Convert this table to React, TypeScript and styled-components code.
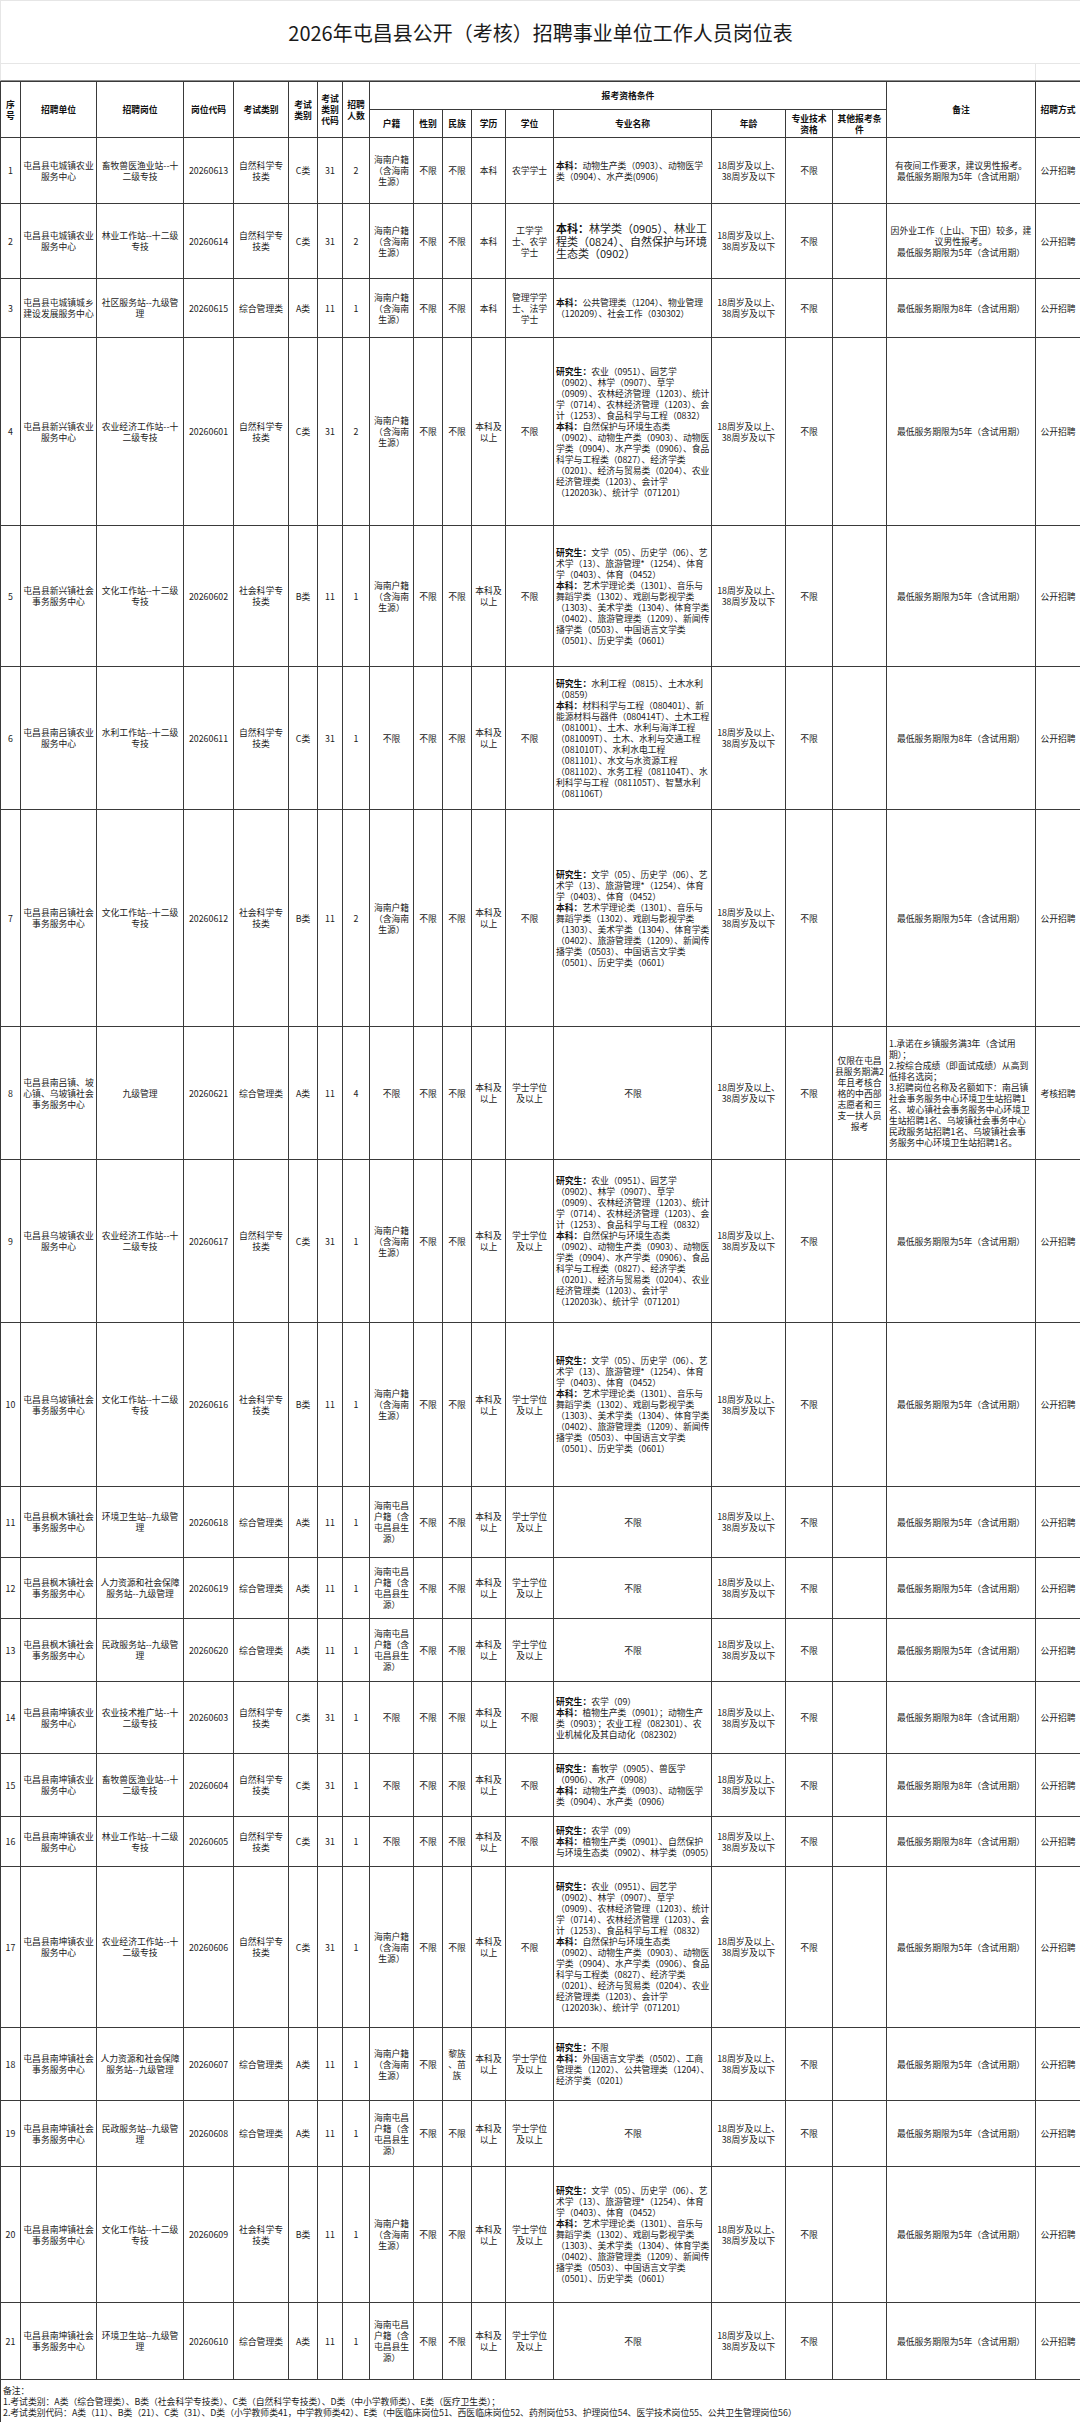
import React from 'react';
import styled, { createGlobalStyle } from 'styled-components';

const GlobalStyle = createGlobalStyle`
  html, body {
    margin: 0;
    padding: 0;
    background: #ffffff;
  }
  body {
    font-family: "Noto Sans CJK SC", "Noto Sans", sans-serif;
    color: #1e1e1e;
  }
`;

const Page = styled.div`
  width: 1080px;
  background: #fff;
`;

const TitleBar = styled.div`
  height: 62px;
  display: flex;
  align-items: center;
  justify-content: center;
  border: 1px solid #e6e6e6;
  border-right: none;
  font-size: 20px;
  color: #1a1a1a;
`;

const BlankRow = styled.div`
  display: grid;
  grid-template-columns: 1035px 1fr;
  height: 16px;
  border-left: 1px solid #e6e6e6;
  border-bottom: 1px solid #8c8c8c;
`;

const BlankCell = styled.div`
  border-right: 1px solid #e6e6e6;
`;

const Table = styled.table`
  width: 1080px;
  table-layout: fixed;
  border-collapse: collapse;
  font-size: 8.8px;
  line-height: 11px;
`;

const Row = styled.tr<{ $h: number }>`
  height: ${p => p.$h}px;
`;

const HeadCell = styled.th`
  border: 1px solid #3a3a3a;
  padding: 1px 2px;
  font-weight: 700;
  font-size: 8.8px;
  line-height: 11px;
  text-align: center;
  vertical-align: middle;
  color: #111;
`;

const Cell = styled.td<{ $align?: 'left' | 'center'; $size?: number }>`
  border: 1px solid #3a3a3a;
  padding: 1px 2px;
  text-align: ${p => p.$align ?? 'center'};
  vertical-align: middle;
  font-size: ${p => p.$size ?? 8.8}px;
  line-height: ${p => (p.$size ? p.$size + 1.5 : 11)}px;
  white-space: pre-line;
  overflow-wrap: anywhere;
  color: #222;
`;

const MajorCell = styled(Cell)`
  padding: 1px 1px 1px 2px;
`;

const Section = styled.div`
  display: block;
`;

const Label = styled.b`
  font-weight: 700;
  color: #111;
`;

const NoteCell = styled.td`
  border: 1px solid #3a3a3a;
  border-bottom: none;
  padding: 5px 2px 0;
  font-size: 8.8px;
  line-height: 11px;
  text-align: left;
  vertical-align: top;
  white-space: pre-line;
  color: #222;
`;

const WIDTHS = [20, 76, 87, 50, 55, 29, 25, 27, 44, 29, 29, 34, 48, 158, 74, 47, 54, 149, 45];

type Major = { grad?: string; ug?: string; plain?: string };

type Job = {
  unit: string;
  post: string;
  code: string;
  cat: string;
  cls: string;
  clsCode: string;
  num: number;
  huji: string;
  nation?: string;
  edu: string;
  degree: string;
  major: Major;
  majorSize?: number;
  other?: string;
  note: string;
  noteAlign?: 'left' | 'center';
  mode: string;
  h: number;
};

const AGE = '18周岁及以上、\n38周岁及以下';
const HN = '海南户籍（含海南生源）';
const TC = '海南屯昌户籍（含屯昌县生源）';
const NOTE5 = '最低服务期限为5年（含试用期）';
const NOTE8 = '最低服务期限为8年（含试用期）';

const AGRI_ECON: Major = {
  grad: '农业（0951）、园艺学（0902）、林学（0907）、草学（0909）、农林经济管理（1203）、统计学（0714）、农林经济管理（1203）、会计（1253）、食品科学与工程（0832）',
  ug: '自然保护与环境生态类（0902）、动物生产类（0903）、动物医学类（0904）、水产学类（0906）、食品科学与工程类（0827）、经济学类（0201）、经济与贸易类（0204）、农业经济管理类（1203）、会计学（120203k）、统计学（071201）',
};

const CULTURE: Major = {
  grad: '文学（05）、历史学（06）、艺术学（13）、旅游管理*（1254）、体育学（0403）、体育（0452）',
  ug: '艺术学理论类（1301）、音乐与舞蹈学类（1302）、戏剧与影视学类（1303）、美术学类（1304）、体育学类（0402）、旅游管理类（1209）、新闻传播学类（0503）、中国语言文学类（0501）、历史学类（0601）',
};

const ANY: Major = { plain: '不限' };

const jobs: Job[] = [
  {
    unit: '屯昌县屯城镇农业服务中心', post: '畜牧兽医渔业站--十二级专技', code: '20260613', cat: '自然科学专技类', cls: 'C类', clsCode: '31', num: 2,
    huji: HN, edu: '本科', degree: '农学学士',
    major: { ug: '动物生产类（0903）、动物医学类（0904）、水产类(0906)' },
    note: '有夜间工作要求，建议男性报考。\n最低服务期限为5年（含试用期）', mode: '公开招聘', h: 66,
  },
  {
    unit: '屯昌县屯城镇农业服务中心', post: '林业工作站--十二级专技', code: '20260614', cat: '自然科学专技类', cls: 'C类', clsCode: '31', num: 2,
    huji: HN, edu: '本科', degree: '工学学士、农学学士',
    major: { ug: '林学类（0905）、林业工程类（0824）、自然保护与环境生态类（0902）' }, majorSize: 11,
    note: '因外业工作（上山、下田）较多，建议男性报考。\n最低服务期限为5年（含试用期）', mode: '公开招聘', h: 75,
  },
  {
    unit: '屯昌县屯城镇城乡建设发展服务中心', post: '社区服务站--九级管理', code: '20260615', cat: '综合管理类', cls: 'A类', clsCode: '11', num: 1,
    huji: HN, edu: '本科', degree: '管理学学士、法学学士',
    major: { ug: '公共管理类（1204）、物业管理（120209）、社会工作（030302）' },
    note: NOTE8, mode: '公开招聘', h: 59,
  },
  {
    unit: '屯昌县新兴镇农业服务中心', post: '农业经济工作站--十二级专技', code: '20260601', cat: '自然科学专技类', cls: 'C类', clsCode: '31', num: 2,
    huji: HN, edu: '本科及以上', degree: '不限', major: AGRI_ECON, note: NOTE5, mode: '公开招聘', h: 188,
  },
  {
    unit: '屯昌县新兴镇社会事务服务中心', post: '文化工作站--十二级专技', code: '20260602', cat: '社会科学专技类', cls: 'B类', clsCode: '11', num: 1,
    huji: HN, edu: '本科及以上', degree: '不限', major: CULTURE, note: NOTE5, mode: '公开招聘', h: 141,
  },
  {
    unit: '屯昌县南吕镇农业服务中心', post: '水利工作站--十二级专技', code: '20260611', cat: '自然科学专技类', cls: 'C类', clsCode: '31', num: 1,
    huji: '不限', edu: '本科及以上', degree: '不限',
    major: {
      grad: '水利工程（0815）、土木水利（0859）',
      ug: '材料科学与工程（080401）、新能源材料与器件（080414T）、土木工程（081001）、土木、水利与海洋工程（081009T）、土木、水利与交通工程（081010T）、水利水电工程（081101）、水文与水资源工程（081102）、水务工程（081104T）、水利科学与工程（081105T）、智慧水利（081106T）',
    },
    note: NOTE8, mode: '公开招聘', h: 143,
  },
  {
    unit: '屯昌县南吕镇社会事务服务中心', post: '文化工作站--十二级专技', code: '20260612', cat: '社会科学专技类', cls: 'B类', clsCode: '11', num: 2,
    huji: HN, edu: '本科及以上', degree: '不限', major: CULTURE, note: NOTE5, mode: '公开招聘', h: 217,
  },
  {
    unit: '屯昌县南吕镇、坡心镇、乌坡镇社会事务服务中心', post: '九级管理', code: '20260621', cat: '综合管理类', cls: 'A类', clsCode: '11', num: 4,
    huji: '不限', edu: '本科及以上', degree: '学士学位及以上', major: ANY,
    other: '仅限在屯昌县服务期满2年且考核合格的中西部志愿者和三支一扶人员报考',
    note: '1.承诺在乡镇服务满3年（含试用期）；\n2.按综合成绩（即面试成绩）从高到低排名选岗；\n3.招聘岗位名称及名额如下：南吕镇社会事务服务中心环境卫生站招聘1名、坡心镇社会事务服务中心环境卫生站招聘1名、乌坡镇社会事务中心民政服务站招聘1名、乌坡镇社会事务服务中心环境卫生站招聘1名。',
    noteAlign: 'left', mode: '考核招聘', h: 133,
  },
  {
    unit: '屯昌县乌坡镇农业服务中心', post: '农业经济工作站--十二级专技', code: '20260617', cat: '自然科学专技类', cls: 'C类', clsCode: '31', num: 1,
    huji: HN, edu: '本科及以上', degree: '学士学位及以上', major: AGRI_ECON, note: NOTE5, mode: '公开招聘', h: 163,
  },
  {
    unit: '屯昌县乌坡镇社会事务服务中心', post: '文化工作站--十二级专技', code: '20260616', cat: '社会科学专技类', cls: 'B类', clsCode: '11', num: 1,
    huji: HN, edu: '本科及以上', degree: '学士学位及以上', major: CULTURE, note: NOTE5, mode: '公开招聘', h: 164,
  },
  {
    unit: '屯昌县枫木镇社会事务服务中心', post: '环境卫生站--九级管理', code: '20260618', cat: '综合管理类', cls: 'A类', clsCode: '11', num: 1,
    huji: TC, edu: '本科及以上', degree: '学士学位及以上', major: ANY, note: NOTE5, mode: '公开招聘', h: 71,
  },
  {
    unit: '屯昌县枫木镇社会事务服务中心', post: '人力资源和社会保障服务站--九级管理', code: '20260619', cat: '综合管理类', cls: 'A类', clsCode: '11', num: 1,
    huji: TC, edu: '本科及以上', degree: '学士学位及以上', major: ANY, note: NOTE5, mode: '公开招聘', h: 61,
  },
  {
    unit: '屯昌县枫木镇社会事务服务中心', post: '民政服务站--九级管理', code: '20260620', cat: '综合管理类', cls: 'A类', clsCode: '11', num: 1,
    huji: TC, edu: '本科及以上', degree: '学士学位及以上', major: ANY, note: NOTE5, mode: '公开招聘', h: 63,
  },
  {
    unit: '屯昌县南坤镇农业服务中心', post: '农业技术推广站--十二级专技', code: '20260603', cat: '自然科学专技类', cls: 'C类', clsCode: '31', num: 1,
    huji: '不限', edu: '本科及以上', degree: '不限',
    major: { grad: '农学（09）', ug: '植物生产类（0901）；动物生产类（0903）；农业工程（082301）、农业机械化及其自动化（082302）' },
    note: NOTE8, mode: '公开招聘', h: 72,
  },
  {
    unit: '屯昌县南坤镇农业服务中心', post: '畜牧兽医渔业站--十二级专技', code: '20260604', cat: '自然科学专技类', cls: 'C类', clsCode: '31', num: 1,
    huji: '不限', edu: '本科及以上', degree: '不限',
    major: { grad: '畜牧学（0905）、兽医学（0906）、水产（0908）', ug: '动物生产类（0903）、动物医学类（0904）、水产类（0906）' },
    note: NOTE8, mode: '公开招聘', h: 63,
  },
  {
    unit: '屯昌县南坤镇农业服务中心', post: '林业工作站--十二级专技', code: '20260605', cat: '自然科学专技类', cls: 'C类', clsCode: '31', num: 1,
    huji: '不限', edu: '本科及以上', degree: '不限',
    major: { grad: '农学（09）', ug: '植物生产类（0901）、自然保护与环境生态类（0902）、林学类（0905）' },
    note: NOTE8, mode: '公开招聘', h: 50,
  },
  {
    unit: '屯昌县南坤镇农业服务中心', post: '农业经济工作站--十二级专技', code: '20260606', cat: '自然科学专技类', cls: 'C类', clsCode: '31', num: 1,
    huji: HN, edu: '本科及以上', degree: '不限', major: AGRI_ECON, note: NOTE5, mode: '公开招聘', h: 161,
  },
  {
    unit: '屯昌县南坤镇社会事务服务中心', post: '人力资源和社会保障服务站--九级管理', code: '20260607', cat: '综合管理类', cls: 'A类', clsCode: '11', num: 1,
    huji: HN, nation: '黎族\n、苗\n族', edu: '本科及以上', degree: '学士学位及以上',
    major: { grad: '不限', ug: '外国语言文学类（0502）、工商管理类（1202）、公共管理类（1204）、经济学类（0201）' },
    note: NOTE5, mode: '公开招聘', h: 73,
  },
  {
    unit: '屯昌县南坤镇社会事务服务中心', post: '民政服务站--九级管理', code: '20260608', cat: '综合管理类', cls: 'A类', clsCode: '11', num: 1,
    huji: TC, edu: '本科及以上', degree: '学士学位及以上', major: ANY, note: NOTE5, mode: '公开招聘', h: 66,
  },
  {
    unit: '屯昌县南坤镇社会事务服务中心', post: '文化工作站--十二级专技', code: '20260609', cat: '社会科学专技类', cls: 'B类', clsCode: '11', num: 1,
    huji: HN, edu: '本科及以上', degree: '学士学位及以上', major: CULTURE, note: NOTE5, mode: '公开招聘', h: 136,
  },
  {
    unit: '屯昌县南坤镇社会事务服务中心', post: '环境卫生站--九级管理', code: '20260610', cat: '综合管理类', cls: 'A类', clsCode: '11', num: 1,
    huji: TC, edu: '本科及以上', degree: '学士学位及以上', major: ANY, note: NOTE5, mode: '公开招聘', h: 77,
  },
];

function MajorText({ major }: { major: Major }) {
  if (major.plain) return <>{major.plain}</>;
  return (
    <>
      {major.grad && (
        <Section>
          <Label>研究生：</Label>
          {major.grad}
        </Section>
      )}
      {major.ug && (
        <Section>
          <Label>本科：</Label>
          {major.ug}
        </Section>
      )}
    </>
  );
}

const FOOT = [
  '备注：',
  '1.考试类别：A类（综合管理类）、B类（社会科学专技类）、C类（自然科学专技类）、D类（中小学教师类）、E类（医疗卫生类）；',
  '2.考试类别代码：A类（11）、B类（21）、C类（31）、D类（小学教师类41，中学教师类42）、E类（中医临床岗位51、西医临床岗位52、药剂岗位53、护理岗位54、医学技术岗位55、公共卫生管理岗位56）',
].join('\n');

export default function App() {
  return (
    <Page>
      <GlobalStyle />
      <TitleBar>2026年屯昌县公开（考核）招聘事业单位工作人员岗位表</TitleBar>
      <BlankRow>
        <BlankCell />
        <div />
      </BlankRow>
      <Table>
        <colgroup>
          {WIDTHS.map((w, i) => (
            <col key={i} style={{ width: w }} />
          ))}
        </colgroup>
        <thead>
          <Row $h={28}>
            <HeadCell rowSpan={2}>序号</HeadCell>
            <HeadCell rowSpan={2}>招聘单位</HeadCell>
            <HeadCell rowSpan={2}>招聘岗位</HeadCell>
            <HeadCell rowSpan={2}>岗位代码</HeadCell>
            <HeadCell rowSpan={2}>考试类别</HeadCell>
            <HeadCell rowSpan={2}>考试类别</HeadCell>
            <HeadCell rowSpan={2}>考试类别代码</HeadCell>
            <HeadCell rowSpan={2}>招聘人数</HeadCell>
            <HeadCell colSpan={9}>报考资格条件</HeadCell>
            <HeadCell rowSpan={2}>备注</HeadCell>
            <HeadCell rowSpan={2}>招聘方式</HeadCell>
          </Row>
          <Row $h={28}>
            <HeadCell>户籍</HeadCell>
            <HeadCell>性别</HeadCell>
            <HeadCell>民族</HeadCell>
            <HeadCell>学历</HeadCell>
            <HeadCell>学位</HeadCell>
            <HeadCell>专业名称</HeadCell>
            <HeadCell>年龄</HeadCell>
            <HeadCell>专业技术资格</HeadCell>
            <HeadCell>其他报考条件</HeadCell>
          </Row>
        </thead>
        <tbody>
          {jobs.map((j, i) => (
            <Row key={j.code} $h={j.h}>
              <Cell>{i + 1}</Cell>
              <Cell>{j.unit}</Cell>
              <Cell>{j.post}</Cell>
              <Cell>{j.code}</Cell>
              <Cell>{j.cat}</Cell>
              <Cell>{j.cls}</Cell>
              <Cell>{j.clsCode}</Cell>
              <Cell>{j.num}</Cell>
              <Cell>{j.huji}</Cell>
              <Cell>不限</Cell>
              <Cell>{j.nation ?? '不限'}</Cell>
              <Cell>{j.edu}</Cell>
              <Cell>{j.degree}</Cell>
              <MajorCell $align={j.major.plain ? 'center' : 'left'} $size={j.majorSize}>
                <MajorText major={j.major} />
              </MajorCell>
              <Cell>{AGE}</Cell>
              <Cell>不限</Cell>
              <Cell>{j.other ?? ''}</Cell>
              <Cell $align={j.noteAlign}>{j.note}</Cell>
              <Cell>{j.mode}</Cell>
            </Row>
          ))}
          <Row $h={44}>
            <NoteCell colSpan={19}>{FOOT}</NoteCell>
          </Row>
        </tbody>
      </Table>
    </Page>
  );
}
